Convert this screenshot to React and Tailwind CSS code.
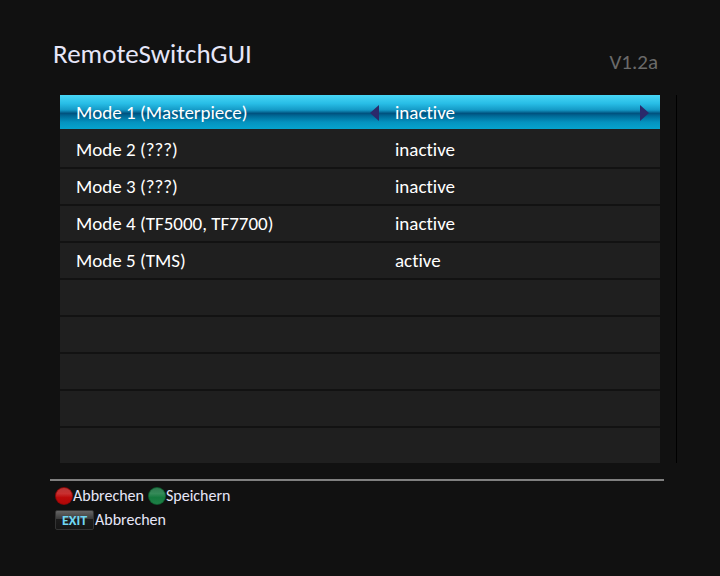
import React, { useState } from 'react';

const initialModes = [
    { id: 1, label: 'Mode 1 (Masterpiece)', active: false },
    { id: 2, label: 'Mode 2 (???)', active: false },
    { id: 3, label: 'Mode 3 (???)', active: false },
    { id: 4, label: 'Mode 4 (TF5000, TF7700)', active: false },
    { id: 5, label: 'Mode 5 (TMS)', active: true },
];

const ROW_COUNT = 10;

function Arrow({ direction, onClick }) {
    return (
        <button
            type="button"
            aria-label={direction === 'left' ? 'Previous value' : 'Next value'}
            onClick={onClick}
            className="block h-4 w-[9px]"
        >
            <svg viewBox="0 0 9 16" className="h-4 w-[9px]" fill="#2b2a6b">
                {direction === 'left' ? <path d="M9 0v16L0 8z" /> : <path d="M0 0v16l9-8z" />}
            </svg>
        </button>
    );
}

function ModeRow({ mode, selected, onSelect, onToggle }) {
    if (!mode) {
        return <li className="h-[37px] border-b-2 border-[#121212] bg-[#1f1f1f] last:h-[35px] last:border-b-0" />;
    }

    return (
        <li
            onClick={onSelect}
            className={`h-[37px] border-b-2 bg-[#1f1f1f] ${selected ? 'border-[#1f1f1f]' : 'border-[#121212]'}`}
        >
            <div
                className={`grid h-[34px] grid-cols-[310px_1fr_16px] items-center pt-0.5 pl-4 pr-1 ${
                    selected
                        ? 'bg-[linear-gradient(#48d6f6,#28bde6_25%,#1499c6_44%,#00527f_54%,#006a98_62%,#0493bf_80%,#06a3cd)]'
                        : ''
                }`}
            >
                <span>{mode.label}</span>
                <span className="flex items-center">
                    <span className="-ml-4 w-[25px]">
                        {selected && <Arrow direction="left" onClick={onToggle} />}
                    </span>
                    <span>{mode.active ? 'active' : 'inactive'}</span>
                </span>
                {selected && <Arrow direction="right" onClick={onToggle} />}
            </div>
        </li>
    );
}

function ColorKey({ color, label, onClick }) {
    const id = `key-${color}`;
    return (
        <button type="button" onClick={onClick} className="flex items-center">
            <svg viewBox="0 0 18 18" className="size-[18px]">
                <defs>
                    <linearGradient id={id} x1="0" y1="0" x2="0" y2="1">
                        <stop offset="0" stopColor={color === 'red' ? '#b83434' : '#2f7a50'} />
                        <stop offset="0.35" stopColor={color === 'red' ? '#c83030' : '#358a58'} />
                        <stop offset="0.6" stopColor={color === 'red' ? '#bc0a0a' : '#157a3e'} />
                        <stop offset="1" stopColor={color === 'red' ? '#b00808' : '#1f8048'} />
                    </linearGradient>
                </defs>
                <circle cx="9" cy="9" r="9" fill={color === 'red' ? '#8c0808' : '#0f5f30'} />
                <circle cx="9" cy="9" r="8" fill={`url(#${id})`} />
            </svg>
            {label}
        </button>
    );
}

function App() {
    const [modes, setModes] = useState(initialModes);
    const [selected, setSelected] = useState(0);

    const toggle = (id) => {
        setModes(modes.map((m) => (m.id === id ? { ...m, active: !m.active } : m)));
    };

    return (
        <div className="min-h-screen bg-[#111111] pt-10 font-['Carlito','Lato',sans-serif] text-white [font-variant-ligatures:none]">
            <header className="flex justify-between pl-[53px] pr-[62px] text-[#e6e6f8]">
                <h1 className="text-[27px] leading-7">RemoteSwitchGUI</h1>
                <span className="pt-2 text-[21px] leading-7 text-[#6a6a6a]">V1.2a</span>
            </header>

            <main className="mr-[43px] ml-[60px] mt-[19px] border-r border-black pr-4">
                <ul className="text-[19px] leading-6">
                    {Array.from({ length: ROW_COUNT }, (_, i) => (
                        <ModeRow
                            key={i}
                            mode={modes[i]}
                            selected={i === selected}
                            onSelect={() => setSelected(i)}
                            onToggle={() => toggle(modes[i].id)}
                        />
                    ))}
                </ul>
            </main>

            <footer className="mr-14 ml-[50px] mt-4 border-t-2 border-[#808080] pl-[5px] text-[16px] leading-5 text-[#e6e6f8]">
                <div className="mt-[5px] flex gap-1">
                    <ColorKey color="red" label="Abbrechen" onClick={() => setModes(initialModes)} />
                    <ColorKey color="green" label="Speichern" />
                </div>
                <button type="button" className="mt-1 flex items-center">
                    <span className="mr-px h-5 w-[39px] rounded-xs border border-[#333333] bg-[linear-gradient(#666666,#3c3c3c_42%,#1c1c1c_46%,#161616)] text-center font-['Liberation_Sans_Narrow','Carlito','Lato',sans-serif] text-[14px] leading-5 font-bold text-[#6fd6f2]">
                        EXIT
                    </span>
                    Abbrechen
                </button>
            </footer>
        </div>
    );
}

export default App;
